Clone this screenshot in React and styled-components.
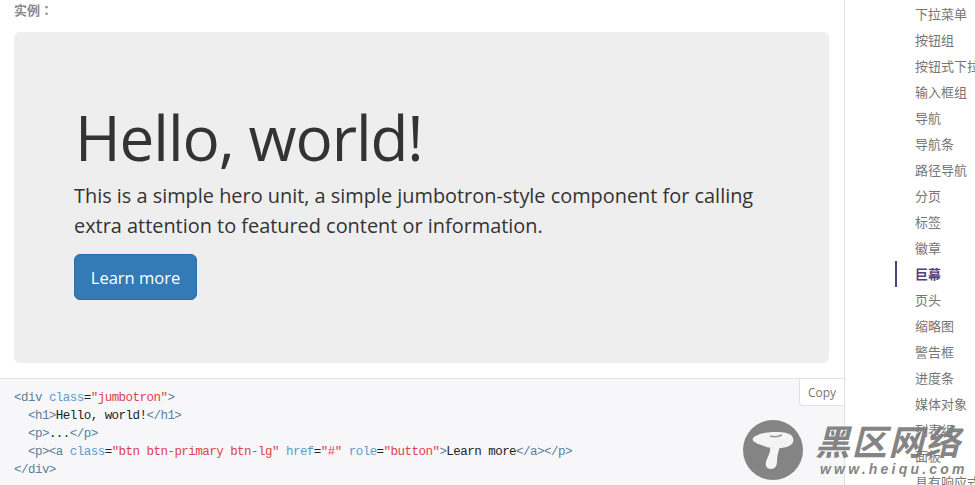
import React from 'react';
import styled, { createGlobalStyle } from 'styled-components';

const cjk = '"Noto Sans CJK SC", sans-serif';
const latin = '"Open Sans", "Noto Sans CJK SC", sans-serif';

const navItems = [
  '下拉菜单', '按钮组', '按钮式下拉菜单', '输入框组', '导航', '导航条', '路径导航', '分页', '标签', '徽章',
  '巨幕', '页头', '缩略图', '警告框', '进度条', '媒体对象', '列表组', '面板', '具有响应式特性的嵌入内容',
];

const GlobalStyle = createGlobalStyle`
  html, body {
    margin: 0;
    padding: 0;
    height: 485px;
    overflow: hidden;
    background: #fff;
  }
`;

const Page = styled.div`
  position: relative;
  display: flex;
  width: 975px;
  height: 485px;
  overflow: hidden;
`;

const Main = styled.main`
  width: 844px;
  flex: none;
  border-right: 1px solid #e1e1e8;
`;

const Label = styled.div`
  padding: 1px 14px 0;
  height: 32px;
  box-sizing: border-box;
  font: bold 13px/17px "Noto Sans CJK TC", sans-serif;
  color: #8a8a8a;
`;

const Jumbotron = styled.section`
  margin: 0 15px 15px 14px;
  height: 331px;
  box-sizing: border-box;
  padding: 70px 60px 0;
  background: #eee;
  border-radius: 6px;
  color: #333;
`;

const Heading = styled.h1`
  margin: 0 0 9px 1px;
  font: 400 62px/70px ${latin};
  letter-spacing: -1.1px;
  color: #333;
`;

const Lead = styled.p`
  margin: 0 0 13px;
  font: 400 19.9px/30px ${latin};
  color: #333;
`;

const Button = styled.a`
  display: inline-block;
  width: 123px;
  height: 46px;
  box-sizing: border-box;
  border: 1px solid #2e6da4;
  border-radius: 6px;
  background: #337ab7;
  color: #fff;
  text-align: center;
  font: 400 16.5px/45px ${latin};
`;

const CodeBlock = styled.div`
  position: relative;
  height: 107px;
  box-sizing: border-box;
  padding: 10px 14px;
  background: #f7f7f9;
  border-top: 1px solid #e1e1e8;
`;

const CopyButton = styled.span`
  position: absolute;
  top: 0;
  right: 0;
  width: 45px;
  height: 27px;
  box-sizing: border-box;
  background: #fff;
  border: 1px solid #e1e1e8;
  border-width: 0 0 1px 1px;
  border-bottom-left-radius: 4px;
  color: #777;
  text-align: center;
  font: 12px/27px ${latin};
`;

const Code = styled.pre`
  margin: 0;
  font: 12.5px/18px "Liberation Mono", monospace;
  letter-spacing: -0.53px;
  color: #222;
`;

const Tag = styled.span`
  color: #5a7f9f;
`;

const Attr = styled.span`
  color: #5b9bd0;
`;

const Str = styled.span`
  color: #d9434e;
`;

const Sidebar = styled.nav`
  flex: 1;
  padding: 1px 0 0 50px;
  min-width: 0;
`;

const NavItem = styled.div`
  position: relative;
  height: 26px;
  padding-left: 20px;
  white-space: nowrap;
  font: ${({ $active }) => ($active ? 700 : 400)} 13px/26px ${cjk};
  color: ${({ $active }) => ($active ? '#563d7c' : '#767676')};
  ${({ $active }) =>
    $active &&
    `
    border-left: 2px solid #563d7c;
    padding-left: 18px;
  `}
`;

const Watermark = styled.div`
  position: absolute;
  left: 743px;
  top: 420px;
  display: flex;
  gap: 12px;
  opacity: 0.92;
`;

const Brand = styled.div`
  display: flex;
  flex-direction: column;
  color: #7b7b7b;
`;

const BrandName = styled.div`
  font: italic 700 35px/40px ${cjk};
  letter-spacing: 1.7px;
`;

const BrandUrl = styled.div`
  font: italic 700 14px/16px "Liberation Sans", sans-serif;
  letter-spacing: 3.2px;
  padding: 1px 0 0 5px;
  white-space: nowrap;
`;

const Logo = () => (
  <svg width="60" height="60" viewBox="0 0 60 60">
    <circle cx="30" cy="30" r="30" fill="#7b7b7b" />
    <path d="M10 18c4-4 13-6 22-6 9 0 17 1 18 6 1 4 0 6-4 8-4 2-9 2-11 2-5 0-10 0-14-2-5-2-13-4-11-8z" fill="#f4f4f4" />
    <path d="M27 27c3 1 7 1 10 0-2 5-3 10-3 14 0 5-2 8-6 8-4 0-6-3-5-7 1-5 5-9 4-15z" fill="#f4f4f4" />
    <path d="M27 16c4 1 8 1 12-1" fill="none" stroke="#8c8c8c" strokeWidth="1.5" />
  </svg>
);

export default function App() {
  return (
    <Page>
      <GlobalStyle />
      <Main>
        <Label>实例：</Label>
        <Jumbotron>
          <Heading>Hello, world!</Heading>
          <Lead>
            This is a simple hero unit, a simple jumbotron-style component for calling
            <br />
            extra attention to featured content or information.
          </Lead>
          <Button>Learn more</Button>
        </Jumbotron>
        <CodeBlock>
          <CopyButton>Copy</CopyButton>
          <Code>
            <Tag>&lt;div</Tag> <Attr>class</Attr>=<Str>"jumbotron"</Str><Tag>&gt;</Tag>
            {'\n  '}<Tag>&lt;h1&gt;</Tag>Hello, world!<Tag>&lt;/h1&gt;</Tag>
            {'\n  '}<Tag>&lt;p&gt;</Tag>...<Tag>&lt;/p&gt;</Tag>
            {'\n  '}<Tag>&lt;p&gt;&lt;a</Tag> <Attr>class</Attr>=<Str>"btn btn-primary btn-lg"</Str> <Attr>href</Attr>=<Str>"#"</Str> <Attr>role</Attr>=<Str>"button"</Str><Tag>&gt;</Tag>Learn more<Tag>&lt;/a&gt;&lt;/p&gt;</Tag>
            {'\n'}<Tag>&lt;/div&gt;</Tag>
          </Code>
        </CodeBlock>
      </Main>
      <Sidebar>
        {navItems.map((item) => (
          <NavItem key={item} $active={item === '巨幕'}>{item}</NavItem>
        ))}
      </Sidebar>
      <Watermark>
        <Logo />
        <Brand>
          <BrandName>黑区网络</BrandName>
          <BrandUrl>www.heiqu.com</BrandUrl>
        </Brand>
      </Watermark>
    </Page>
  );
}
